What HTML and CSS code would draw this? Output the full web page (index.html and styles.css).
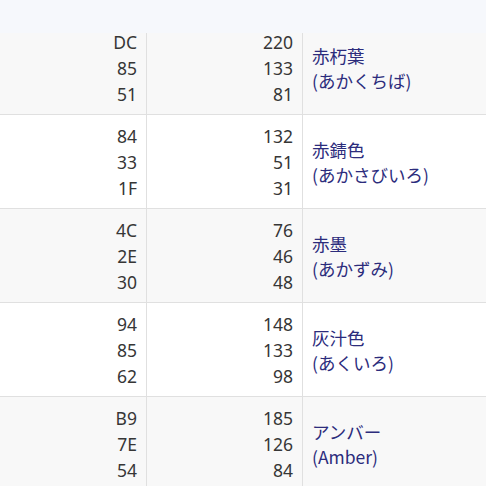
FILE: index.html
```html
<!DOCTYPE html>
<html lang="ja">
<head>
<meta charset="utf-8">
<link rel="stylesheet" href="styles.css">
</head>
<body>
<div class="topbar"></div>
<div class="table">
  <div class="row alt">
    <div class="cell num"><span>DC</span><span>85</span><span>51</span></div>
    <div class="cell num"><span>220</span><span>133</span><span>81</span></div>
    <div class="cell name"><span>赤朽葉</span><span>(あかくちば)</span></div>
  </div>
  <div class="row">
    <div class="cell num"><span>84</span><span>33</span><span>1F</span></div>
    <div class="cell num"><span>132</span><span>51</span><span>31</span></div>
    <div class="cell name"><span>赤錆色</span><span>(あかさびいろ)</span></div>
  </div>
  <div class="row alt">
    <div class="cell num"><span>4C</span><span>2E</span><span>30</span></div>
    <div class="cell num"><span>76</span><span>46</span><span>48</span></div>
    <div class="cell name"><span>赤墨</span><span>(あかずみ)</span></div>
  </div>
  <div class="row">
    <div class="cell num"><span>94</span><span>85</span><span>62</span></div>
    <div class="cell num"><span>148</span><span>133</span><span>98</span></div>
    <div class="cell name"><span>灰汁色</span><span>(あくいろ)</span></div>
  </div>
  <div class="row alt">
    <div class="cell num"><span>B9</span><span>7E</span><span>54</span></div>
    <div class="cell num"><span>185</span><span>126</span><span>84</span></div>
    <div class="cell name"><span>アンバー</span><span>(Amber)</span></div>
  </div>
</div>
</body>
</html>
```
FILE: styles.css
```css
html, body {
  margin: 0;
  padding: 0;
  background: #ffffff;
  overflow: hidden;
}
body {
  font-family: "Noto Sans", "Noto Sans CJK JP", sans-serif;
  font-size: 17.5px;
  line-height: 26px;
  color: #363636;
  height: 486px;
}
.topbar {
  position: fixed;
  top: 0;
  left: 0;
  right: 0;
  height: 33px;
  background: #f6f8fc;
  z-index: 2;
}
.table {
  padding-top: 21px;
}
.row {
  display: grid;
  grid-template-columns: 147px 156px 1fr;
  border-bottom: 1px solid #e0e0e0;
  background: #ffffff;
}
.row.alt {
  background: #f8f8f8;
}
.cell {
  display: flex;
  flex-direction: column;
  padding: 8px 9px 7px 9px;
  border-right: 1px solid #e0e0e0;
}
.cell:last-child {
  border-right: none;
}
.num {
  align-items: flex-end;
  text-align: right;
}
.name {
  justify-content: center;
  color: #2c2c7c;
  font-family: "Noto Sans CJK JP", "Noto Sans", sans-serif;
  font-size: 17.5px;
  line-height: 25px;
  padding-left: 9px;
}
```
